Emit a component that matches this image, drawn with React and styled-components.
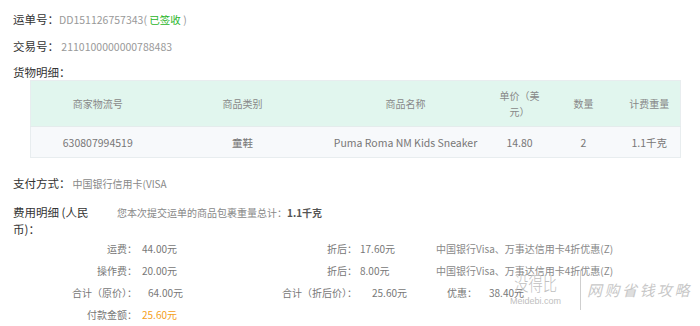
import React from "react";
import styled, { createGlobalStyle } from "styled-components";

const GlobalStyle = createGlobalStyle`
  body {
    margin: 0;
    background: #fff;
    font-family: "Noto Sans CJK SC", "Noto Sans", sans-serif;
    font-size: 10px;
  }
`;

const columns = [
  { title: "商家物流号", width: 134, value: "630807994519" },
  { title: "商品类别", width: 156, value: "童鞋" },
  { title: "商品名称", width: 170, value: "Puma Roma NM Kids Sneaker" },
  { title: "单价（美元）", width: 58, value: "14.80" },
  { title: "数量", width: 70, value: "2" },
  { title: "计费重量", width: 62, value: "1.1千克" },
];

const fees = [
  {
    label: "运费：",
    value: "44.00元",
    label2: "折后：",
    value2: "17.60元",
    note: "中国银行Visa、万事达信用卡4折优惠(Z)",
  },
  {
    label: "操作费：",
    value: "20.00元",
    label2: "折后：",
    value2: "8.00元",
    note: "中国银行Visa、万事达信用卡4折优惠(Z)",
  },
  {
    label: "合计（原价）：",
    value: "64.00元",
    label2: "合计（折后价）：",
    value2: "25.60元",
    discount: "38.40元",
    total: true,
  },
];

const App = () => {
  return (
    <>
      <GlobalStyle />
      <Page>
        <InfoLine>
          <Label>运单号：</Label>
          <Muted>DD151126757343(</Muted>
          <Status> 已签收 </Status>
          <Muted>)</Muted>
        </InfoLine>
        <InfoLine>
          <Label>交易号：</Label>
          <Muted> 2110100000000788483</Muted>
        </InfoLine>
        <Heading>货物明细：</Heading>

        <Table>
          <thead>
            <tr>
              {columns.map((c) => (
                <Th key={c.title} $w={c.width}>
                  {c.title}
                </Th>
              ))}
            </tr>
          </thead>
          <tbody>
            <tr>
              {columns.map((c) => (
                <Td key={c.title}>{c.value}</Td>
              ))}
            </tr>
          </tbody>
        </Table>

        <PayLine>
          <Label>支付方式：</Label>
          <PayValue>中国银行信用卡(VISA</PayValue>
        </PayLine>

        <FeeHead>
          <FeeTitle>费用明细 (人民币)：</FeeTitle>
          <Summary>
            您本次提交运单的商品包裹重量总计：<b>1.1千克</b>
          </Summary>
        </FeeHead>

        <FeeGrid>
          {fees.map((f) => (
            <React.Fragment key={f.label}>
              <FeeLabel>{f.label}</FeeLabel>
              <FeeValue $indent={f.total ? 11 : 5}>{f.value}</FeeValue>
              <FeeLabel>{f.label2}</FeeLabel>
              <FeeValue $indent={f.total ? 15 : 3}>{f.value2}</FeeValue>
              {f.discount ? (
                <Discount>
                  优惠：<span>{f.discount}</span>
                </Discount>
              ) : (
                <Note>{f.note}</Note>
              )}
            </React.Fragment>
          ))}
          <FeeLabel>付款金额：</FeeLabel>
          <FeeValue $indent={5} $accent>
            25.60元
          </FeeValue>
        </FeeGrid>

        <Watermark>
          <Brand>
            <BrandName>没得比</BrandName>
            <BrandUrl>Meidebi.com</BrandUrl>
          </Brand>
          <Slogan>网购省钱攻略</Slogan>
        </Watermark>
      </Page>
    </>
  );
};

const Page = styled.div`
  position: relative;
  width: 700px;
  height: 326px;
  overflow: hidden;
  box-sizing: border-box;
  padding: 11px 0 0 13px;
`;

const InfoLine = styled.div`
  line-height: 17px;
  margin-bottom: 10px;
  white-space: pre;
`;

const Label = styled.span`
  color: #333;
  font-size: 11.5px;
`;

const Muted = styled.span`
  color: #999;
  font-size: 10.5px;
`;

const Status = styled.span`
  color: #2ab52a;
  font-size: 10.5px;
`;

const Heading = styled.div`
  color: #333;
  font-size: 11.5px;
  line-height: 15px;
`;

const Table = styled.table`
  margin-left: 17px;
  width: 650px;
  border-collapse: collapse;
  table-layout: fixed;
  border: 1px solid #e8edef;
`;

const Th = styled.th`
  width: ${(p) => p.$w}px;
  height: 46px;
  padding: 0 4px;
  box-sizing: border-box;
  background: #e1f6ee;
  color: #888;
  font-size: 10px;
  font-weight: normal;
  line-height: 16px;
  text-align: center;
  border-bottom: 1px solid #e4ecec;
`;

const Td = styled.td`
  height: 30px;
  padding: 0;
  background: #f7f9fb;
  color: #777;
  font-size: 10.5px;
  text-align: center;
`;

const PayLine = styled.div`
  margin-top: 17px;
  line-height: 17px;
`;

const PayValue = styled.span`
  color: #888;
  margin-left: 2px;
`;

const FeeHead = styled.div`
  display: flex;
  margin-top: 12px;
  line-height: 17px;
`;

const FeeTitle = styled.div`
  width: 82px;
  color: #333;
  font-size: 11.5px;
`;

const Summary = styled.div`
  margin-left: 22px;
  color: #888;
  font-size: 10px;
  b {
    color: #555;
  }
`;

const FeeGrid = styled.div`
  display: grid;
  grid-template-columns: 124px 101px 119px 79px 1fr;
  grid-auto-rows: 22px;
  align-items: center;
  margin-top: -1px;
`;

const FeeLabel = styled.div`
  text-align: right;
  color: #777;
  white-space: nowrap;
`;

const FeeValue = styled.div`
  padding-left: ${(p) => p.$indent}px;
  color: ${(p) => (p.$accent ? "#f5a020" : "#777")};
  white-space: nowrap;
`;

const Note = styled.div`
  color: #888;
  white-space: nowrap;
`;

const Discount = styled.div`
  padding-left: 11px;
  color: #777;
  white-space: nowrap;
  span {
    margin-left: 12px;
  }
`;

const Watermark = styled.div`
  position: absolute;
  left: 514px;
  top: 270px;
  display: flex;
  align-items: flex-start;
  white-space: nowrap;
  pointer-events: none;
  color: #c0c0c0;
`;

const Brand = styled.div`
  display: flex;
  flex-direction: column;
  align-items: center;
  width: 43px;
  padding-right: 23px;
  border-right: 1px solid #cfcfcf;
  height: 40px;
`;

const BrandName = styled.div`
  font-size: 19px;
  line-height: 26px;
  font-weight: 300;
  transform: scaleX(0.75);
`;

const BrandUrl = styled.div`
  font-size: 9px;
  line-height: 11px;
  font-family: "Liberation Sans", sans-serif;
`;

const Slogan = styled.div`
  margin-left: 6px;
  margin-top: 9px;
  font-size: 15px;
  letter-spacing: 2.5px;
  color: #c8c8c8;
  font-style: italic;
`;

export default App;
